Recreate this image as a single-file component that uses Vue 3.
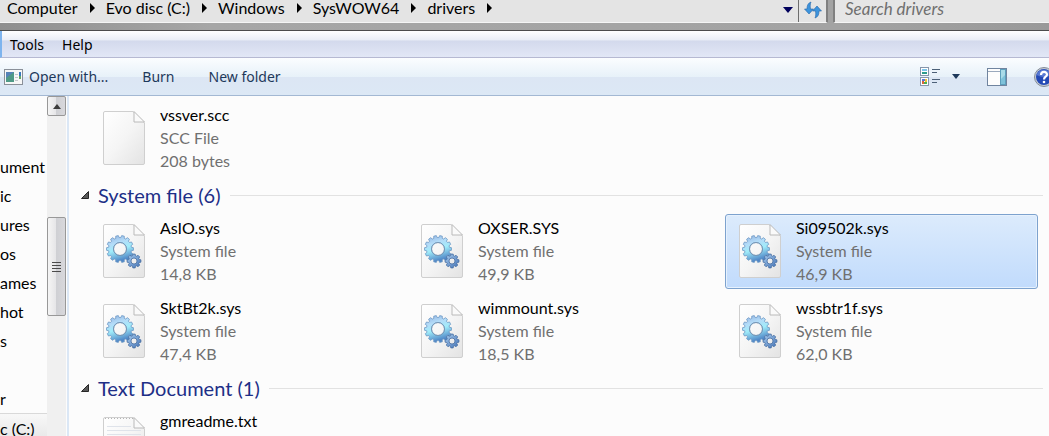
<script setup>
import { ref } from 'vue'

const crumbs = ['Computer', 'Evo disc (C:)', 'Windows', 'SysWOW64', 'drivers']

const search = ref('')

// sidebar entries, the pane is scrolled to the right
const folders = ['ument', 'ic', 'ures', 'os', 'ames', 'hot', 's']
const drives = [
  { name: 'r', active: false },
  { name: 'c (C:)', active: true }
]

const groups = ref([
  {
    title: '',
    open: true,
    files: [{ name: 'vssver.scc', type: 'SCC File', size: '208 bytes', icon: 'blank' }]
  },
  {
    title: 'System file (6)',
    open: true,
    files: [
      { name: 'AsIO.sys', type: 'System file', size: '14,8 KB', icon: 'gear' },
      { name: 'OXSER.SYS', type: 'System file', size: '49,9 KB', icon: 'gear' },
      { name: 'Si09502k.sys', type: 'System file', size: '46,9 KB', icon: 'gear' },
      { name: 'SktBt2k.sys', type: 'System file', size: '47,4 KB', icon: 'gear' },
      { name: 'wimmount.sys', type: 'System file', size: '18,5 KB', icon: 'gear' },
      { name: 'wssbtr1f.sys', type: 'System file', size: '62,0 KB', icon: 'gear' }
    ]
  },
  {
    title: 'Text Document (1)',
    open: true,
    files: [{ name: 'gmreadme.txt', type: '', size: '', icon: 'text' }]
  }
])

const selected = ref('Si09502k.sys')

// outline of a gear wheel with a round hole
function gearPath(cx, cy, outer, inner, hole, teeth) {
  const step = (Math.PI * 2) / teeth
  const points = []
  for (let i = 0; i < teeth; i++) {
    const a = i * step
    const corners = [[inner, -0.34], [outer, -0.22], [outer, 0.22], [inner, 0.34]]
    corners.forEach(([r, k]) => {
      points.push(`${(cx + r * Math.cos(a + k * step)).toFixed(2)} ${(cy + r * Math.sin(a + k * step)).toFixed(2)}`)
    })
  }
  return `M${points.join('L')}Z M${cx - hole} ${cy}a${hole} ${hole} 0 1 0 ${hole * 2} 0a${hole} ${hole} 0 1 0 ${-hole * 2} 0Z`
}

const bigGear = gearPath(18, 26, 13.5, 11.5, 6.5, 14)
const smallGear = gearPath(32, 38, 7, 5.5, 3, 8)
</script>

<template>
  <div class="explorer">
    <svg class="defs" width="0" height="0" aria-hidden="true">
      <defs>
        <linearGradient id="paper" x1="0" y1="0" x2="1" y2="1">
          <stop offset="0" stop-color="#ffffff" />
          <stop offset="0.5" stop-color="#f5f5f5" />
          <stop offset="1" stop-color="#e3e3e3" />
        </linearGradient>
        <linearGradient id="metal" x1="0" y1="0" x2="0.3" y2="1">
          <stop offset="0" stop-color="#8fb0e0" />
          <stop offset="0.35" stop-color="#b4dcf8" />
          <stop offset="0.6" stop-color="#a0ecfa" />
          <stop offset="1" stop-color="#4f86c6" />
        </linearGradient>
        <linearGradient id="metal-small" x1="0" y1="0" x2="1" y2="1">
          <stop offset="0" stop-color="#a9cdf0" />
          <stop offset="1" stop-color="#4473b5" />
        </linearGradient>
      </defs>
    </svg>

    <header class="address-row">
      <nav class="address" aria-label="Address">
        <template v-for="crumb in crumbs" :key="crumb">
          <button type="button" class="crumb">{{ crumb }}</button>
          <svg class="crumb-arrow" width="5" height="10" viewBox="0 0 5 10"><path d="M0 0L5 5L0 10Z" /></svg>
        </template>
        <button type="button" class="history" aria-label="Previous locations">
          <svg width="10" height="6" viewBox="0 0 10 6"><path d="M0 0H10L5 6Z" fill="#00005c" /></svg>
        </button>
        <button type="button" class="refresh" aria-label="Refresh">
          <svg width="18" height="18" viewBox="0 0 18 18">
            <path d="M7 1C4 2 3 4.500 3 8H0.500L5 13L9.500 8H6.500C6 5 6.200 3 7 1Z" fill="#3d94dc" stroke="#2565aa" stroke-width="0.6" />
            <path d="M11 17C14 16 15 13.500 15 10H17.500L13 5L8.500 10H11.500C12 13 11.800 15 11 17Z" fill="#3d94dc" stroke="#2565aa" stroke-width="0.6" />
          </svg>
        </button>
      </nav>
      <input v-model="search" class="search" type="text" placeholder="Search drivers" aria-label="Search drivers" />
    </header>

    <div class="menu-bar">
      <button type="button">Tools</button>
      <button type="button">Help</button>
    </div>

    <div class="toolbar">
      <button type="button" class="open-with">
        <svg width="19" height="16" viewBox="0 0 19 16">
          <rect x="0.500" y="0.500" width="18" height="15" fill="#f7f7f7" stroke="#8a9099" />
          <rect x="2" y="3" width="8" height="10" fill="#4f9a87" />
          <path d="M2 3H10L2 9Z" fill="#5583b8" />
          <path d="M11 5.500H14M11 8.500H14M11 11.500H14" stroke="#c3c7cb" />
          <rect x="15" y="3" width="2" height="5" fill="#3779bd" />
          <rect x="15" y="7" width="2" height="3" fill="#63a866" />
        </svg>
        Open with...
      </button>
      <button type="button">Burn</button>
      <button type="button">New folder</button>
      <div class="tools-right">
        <button type="button" class="views" aria-label="Change your view">
          <svg width="20" height="19" viewBox="0 0 20 19">
            <rect x="0.500" y="0.500" width="8" height="8" fill="#fff" stroke="#8796ab" />
            <rect x="2" y="2" width="5" height="2" fill="#7cc4ea" />
            <rect x="2" y="4" width="5" height="1" fill="#fff" />
            <rect x="2" y="5" width="5" height="2" fill="#2e9c8b" />
            <rect x="0.500" y="10.500" width="8" height="8" fill="#fff" stroke="#8796ab" />
            <rect x="2" y="12" width="3" height="2" fill="#5a75d6" />
            <rect x="5" y="12" width="2" height="3" fill="#f0c437" />
            <rect x="2" y="14" width="2" height="3" fill="#d9623f" />
            <rect x="4" y="15" width="3" height="2" fill="#4caf50" />
            <path d="M12 2.500H20M12 5.500H17M12 12.500H20M12 15.500H17" stroke="#4c6078" />
          </svg>
          <svg width="8" height="5" viewBox="0 0 8 5"><path d="M0 0H8L4 5Z" fill="#1e395b" /></svg>
        </button>
        <button type="button" aria-label="Show the preview pane">
          <svg width="20" height="18" viewBox="0 0 20 18">
            <rect x="0.500" y="0.500" width="19" height="17" fill="#fdfdfd" stroke="#70849f" />
            <path d="M1 3.500H13" stroke="#9aa9bd" />
            <rect x="13.500" y="1.500" width="5" height="15" fill="#7fc2da" stroke="#5d9fbc" />
            <path d="M14 2H18V7L14 11Z" fill="#a9dbe8" />
          </svg>
        </button>
        <button type="button" class="help" aria-label="Get help">
          <svg width="20" height="20" viewBox="0 0 20 20">
            <circle cx="10" cy="10" r="9.500" fill="#c5ccd6" stroke="#858d99" />
            <circle cx="10" cy="10" r="8" fill="#2349b5" />
            <path d="M2.500 8A8 8 0 0 1 17.500 8Q10 12 2.500 8Z" fill="#5879d2" />
            <path d="M7 8C7 4 13 4 13 7.500C13 10 10 9.500 10 12.500" fill="none" stroke="#fff" stroke-width="2.200" />
            <circle cx="10" cy="15" r="1.300" fill="#fff" />
          </svg>
        </button>
      </div>
    </div>

    <div class="body">
      <nav class="sidebar" aria-label="Folders">
        <a v-for="folder in folders" :key="folder" href="#">{{ folder }}</a>
        <div class="drives">
          <a v-for="drive in drives" :key="drive.name" href="#" :class="{ active: drive.active }">{{ drive.name }}</a>
        </div>
      </nav>

      <div class="scrollbar">
        <button type="button" class="scroll-up" aria-label="Scroll up">
          <svg width="8" height="5" viewBox="0 0 8 5"><path d="M0 5H8L4 0Z" fill="#3c3c3c" /></svg>
        </button>
        <div class="before"></div>
        <div class="thumb">
          <svg width="9" height="11" viewBox="0 0 9 11">
            <path d="M0 1.500H9M0 4.500H9M0 7.500H9M0 10.500H9" stroke="#4b4b4b" />
          </svg>
        </div>
        <div class="after"></div>
      </div>

      <main class="content">
        <section v-for="group in groups" :key="group.title">
          <button v-if="group.title" type="button" class="group-title" :aria-expanded="group.open" @click="group.open = !group.open">
            <svg width="8" height="8" viewBox="0 0 8 8"><path d="M0.500 7.500H7.500V0.500Z" fill="#595959" stroke="#262626" /></svg>
            <span>{{ group.title }}</span>
            <span class="rule"></span>
          </button>
          <div v-if="group.open" class="files">
            <button
              v-for="file in group.files"
              :key="file.name"
              type="button"
              class="file"
              :class="{ selected: file.name === selected }"
              @click="selected = file.name"
            >
              <svg class="file-icon" width="44" height="56" viewBox="0 0 44 56">
                <path d="M3 1.500H31L42.500 13V53Q42.500 54.500 41 54.500H3Q1.500 54.500 1.500 53V3Q1.500 1.500 3 1.500Z" fill="url(#paper)" stroke="#cfcfcf" />
                <path d="M32 1.500V12H42.500Z" fill="#fafafa" stroke="#bababa" />
                <g v-if="file.icon === 'gear'" fill-rule="evenodd" stroke-width="0.8">
                  <path :d="bigGear" fill="url(#metal)" stroke="#6c98c4" />
                  <circle cx="18" cy="26" r="6.500" fill="none" stroke="#7390ad" />
                  <path :d="smallGear" fill="url(#metal-small)" stroke="#456c9f" />
                </g>
                <path v-if="file.icon === 'text'" d="M5 10.500H29M5 14.500H39M5 18.500H39M5 22.500H39M5 26.500H39" stroke="#dfe3ea" />
                <path v-if="file.icon === 'text'" d="M3 2.500H31" stroke="#b5b5b5" stroke-dasharray="1 2" />
              </svg>
              <span class="file-text">
                <span class="name">{{ file.name }}</span>
                <span>{{ file.type }}</span>
                <span>{{ file.size }}</span>
              </span>
            </button>
          </div>
        </section>
      </main>
    </div>
  </div>
</template>

<style>
body {
  overflow: hidden;
}
</style>

<style scoped>
.explorer {
  display: flex;
  flex-direction: column;
  height: 100vh;
  overflow: hidden;
  background: #fcfcfc;
  color: #000;
  font-family: Lato, "Liberation Sans", sans-serif;
  font-size: 16px;
}

.defs {
  position: absolute;
}

svg {
  display: block;
  flex-shrink: 0;
}

button {
  display: flex;
  align-items: center;
  padding: 0;
  border: 0;
  background: none;
  color: inherit;
  font: inherit;
  text-align: left;
  white-space: nowrap;
}

/* 地址栏 */
.address-row {
  display: flex;
  flex-shrink: 0;
  gap: 5px;
  height: 23px;
  padding-bottom: 7px;
  border-bottom: 1px solid #4c4c4c;
  background: linear-gradient(90deg, #8f8f8f, #a6a6a6 20%, #a3a3a3 80%, #999999);
}

.address {
  display: flex;
  flex: 1;
  align-items: flex-start;
  border-right: 2px solid #808080;
  border-bottom: 1px solid #f5f5f5;
  padding-left: 7px;
  background: #e4e4e4;
}

.crumb {
  line-height: 16px;
}

.crumb-arrow {
  margin: 3px 11px 0 12px;
}

.history {
  margin-left: auto;
  padding: 7px 5px 0 0;
}

.refresh {
  justify-content: center;
  align-self: stretch;
  width: 28px;
  padding-bottom: 3px;
  border-left: 1px solid #6d6d6d;
}

.search {
  width: 216px;
  box-sizing: border-box;
  padding: 0 0 4px 10px;
  border: 0;
  border-left: 2px solid #808080;
  border-bottom: 1px solid #f5f5f5;
  border-radius: 0;
  background: #e6e6e6;
  font: inherit;
  font-size: 17px;
  font-style: italic;
  line-height: 18px;
  outline: none;
}

.search::placeholder {
  color: #6f6f6f;
  opacity: 1;
}

/* 菜单和工具栏 */
.menu-bar,
.toolbar {
  display: flex;
  flex-shrink: 0;
  font-family: "Noto Sans", sans-serif;
  font-size: 14px;
}

.menu-bar {
  gap: 18px;
  height: 25px;
  padding: 1px 0 0 8px;
  box-sizing: content-box;
  border-left: 2px solid #7eb4ee;
  border-bottom: 1px solid #b6b9d2;
  background: linear-gradient(#ffffff, #e9edf6 36%, #d3d9ec 37%, #e2e7f6);
}

.toolbar {
  height: 37px;
  padding-left: 4px;
  border-bottom: 1px solid #a3b8d3;
  background: linear-gradient(#fbfdff, #e7f1f9 51%, #dce6f4 52%, #dce8f5);
  color: #1e395b;
  gap: 34px;
}

.open-with {
  gap: 6px;
}

.tools-right {
  display: flex;
  gap: 27px;
  margin-left: auto;
  margin-right: -5px;
}

.views {
  gap: 12px;
}

/* 主体 */
.body {
  display: flex;
  flex: 1;
  min-height: 0;
}

.sidebar {
  width: 47px;
  flex-shrink: 0;
  box-sizing: border-box;
  padding-top: 56px;
  overflow: hidden;
}

.sidebar a {
  display: block;
  height: 29px;
  color: #000;
  line-height: 29px;
  text-decoration: none;
  white-space: nowrap;
}

.drives {
  padding-top: 29px;
}

.sidebar .active {
  border-top: 1px solid #d9d9d9;
  background: linear-gradient(#f8f8f8, #e5e5e5);
}

.scrollbar {
  display: flex;
  flex-direction: column;
  flex-shrink: 0;
  width: 19px;
  background: #f0f0f0;
}

.scroll-up,
.thumb {
  display: flex;
  align-items: center;
  justify-content: center;
  border: 1px solid #989898;
  border-radius: 2px;
  background: linear-gradient(90deg, #f5f5f5, #e6e6e8 45%, #cfd0d4 50%, #d8d8dc);
}

.scroll-up {
  height: 20px;
}

.before {
  flex: 101;
}

.thumb {
  flex: 97;
}

.after {
  flex: 120;
}

.content {
  flex: 1;
  min-width: 0;
  margin-left: 1px;
  padding: 5px 6px 0 12px;
  border-left: 2px solid #dbe7f5;
  overflow: hidden;
}

.group-title {
  gap: 9px;
  width: 100%;
  height: 38px;
  color: #1e2f87;
  font-size: 20px;
}

.rule {
  flex: 1;
  height: 1px;
  background: #e2e2e2;
}

.files {
  display: grid;
  grid-template-columns: repeat(3, 1fr);
  gap: 5px;
  padding: 0 5px 0 8px;
}

.file {
  height: 75px;
  box-sizing: border-box;
  padding: 0 0 2px 12px;
  border: 1px solid transparent;
  border-radius: 3px;
  gap: 14px;
}

.file.selected {
  border-color: #7da2ce;
  background: linear-gradient(#dcebfc, #c1dbfc);
  box-shadow: inset 0 0 0 1px #e6f1fd;
}

.file-text {
  display: flex;
  flex-direction: column;
  height: 69px;
  color: #707070;
  line-height: 23px;
}

.name {
  color: #000;
}
</style>
